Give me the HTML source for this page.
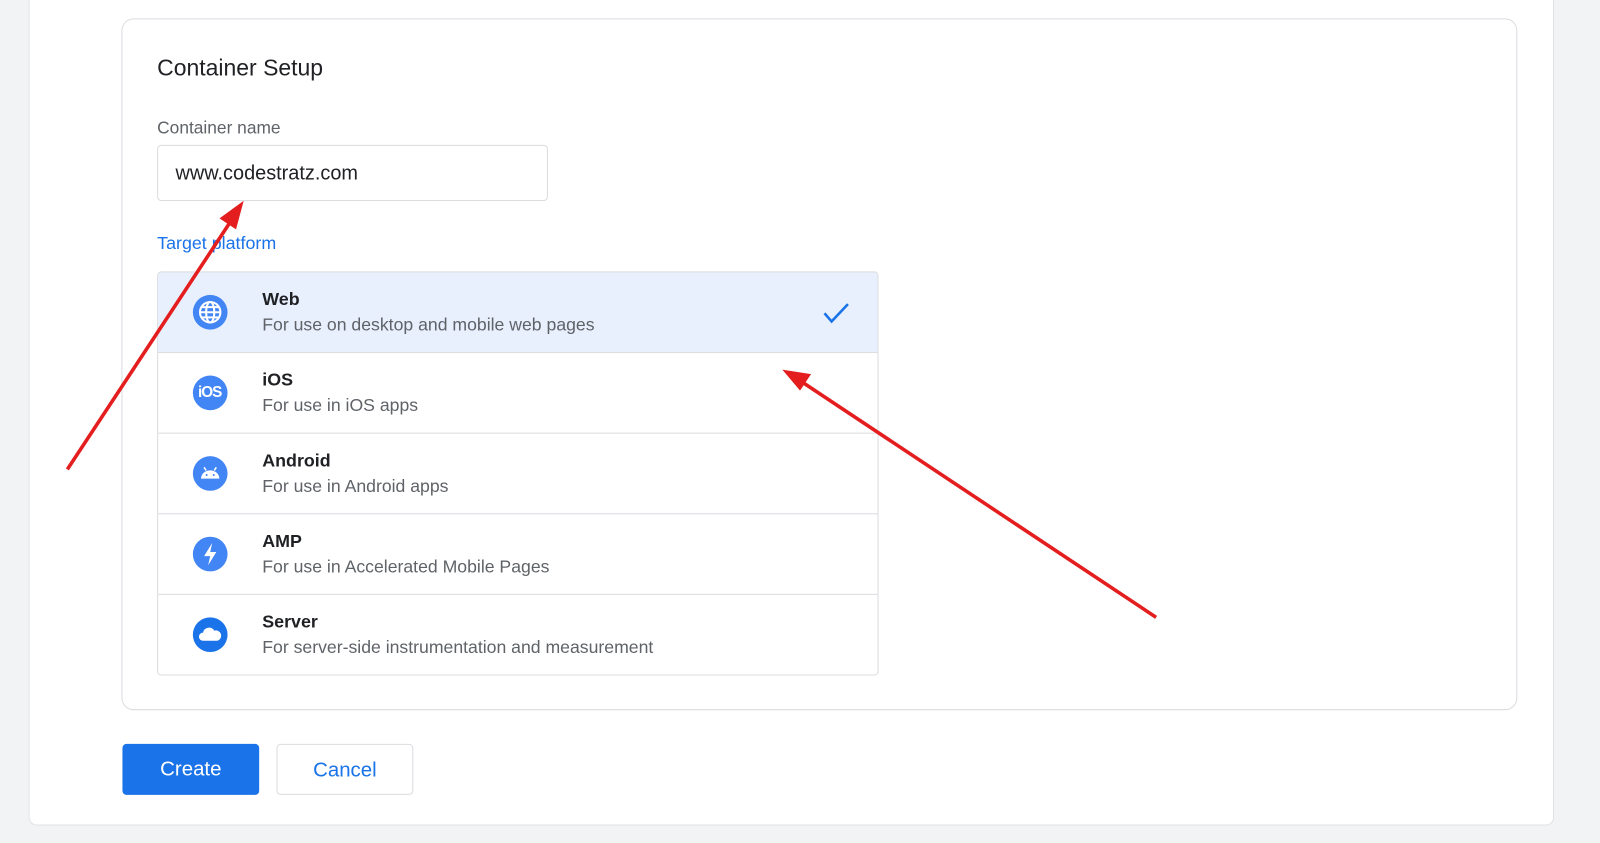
<!DOCTYPE html>
<html><head><style>
body{margin:0;width:1600px;height:826px;background:#f1f3f4;font-family:"Liberation Sans",Arial,sans-serif;position:relative;overflow:hidden}
#w{position:absolute;left:0;top:0;width:1568px;height:810px;transform:scale(1.0204);transform-origin:0 0}
.panel{position:absolute;left:28px;top:-10px;width:1493px;height:818px;background:#fff;border-left:1px solid #e0e2e5;border-right:1px solid #e0e2e5;border-bottom:1px solid #e0e2e5;border-radius:0 0 8px 8px}
.card{position:absolute;left:119px;top:18px;width:1366px;height:676px;border:1px solid #dadce0;border-radius:12px;background:#fff}
.t{position:absolute;color:#202124;white-space:nowrap}
.box{position:absolute;left:154px;top:266px;width:705px;height:394px;border:1px solid #dadce0;border-radius:4px;overflow:hidden}
.row{position:absolute;left:0;width:705px;height:78px;border-top:1px solid #dadce0}
.row .ic{position:absolute;left:34px;top:22px;width:34px;height:34px;border-radius:50%;background:#4285f4}
.row .n{position:absolute;left:102px;top:16px;font-size:17.5px;font-weight:bold;color:#202124}
.row .d{position:absolute;left:102px;top:41px;font-size:17.3px;color:#5f6368;white-space:nowrap}
.btn{position:absolute;top:729px;height:50px;border-radius:4px;font-size:20px;text-align:center;line-height:50px;box-sizing:border-box}
</style></head><body>
<div id="w">
<div class="panel"></div>
<div class="card"></div>
<div class="t" style="left:154px;top:54px;font-size:22.5px">Container Setup</div>
<div class="t" style="left:154px;top:116px;font-size:17px;color:#5f6368">Container name</div>
<div style="position:absolute;left:154px;top:142px;width:383px;height:55px;border:1px solid #dadce0;border-radius:4px;box-sizing:border-box"></div>
<div class="t" style="left:172px;top:159px;font-size:19.5px">www.codestratz.com</div>
<div class="t" style="left:154px;top:228px;font-size:17.5px;color:#1a73e8">Target platform</div>
<div class="box">
 <div class="row" style="top:-1px;background:#e8f0fe">
  <div class="ic"><svg width="34" height="34" viewBox="0 0 34 34" fill="none" stroke="#fff" stroke-width="2"><circle cx="17" cy="17" r="10"/><ellipse cx="17" cy="17" rx="4" ry="10"/><path d="M7 17h20M9 12h16M9 22h16"/></svg></div>
  <div class="n">Web</div><div class="d">For use on desktop and mobile web pages</div>
  <svg style="position:absolute;left:650px;top:28px" width="30" height="24" viewBox="0 0 30 24"><path d="M3 12l7 8L26 3" fill="none" stroke="#1a73e8" stroke-width="2.5"/></svg>
 </div>
 <div class="row" style="top:78px"><div class="ic"><span style="position:absolute;left:5px;top:8px;color:#fff;font-weight:bold;font-size:15px;letter-spacing:-1px">iOS</span></div><div class="n">iOS</div><div class="d">For use in iOS apps</div></div>
 <div class="row" style="top:157px"><div class="ic"><svg width="34" height="34" viewBox="0 0 34 34"><path d="M8 22a9 8 0 0 1 18 0z" fill="#fff"/><path d="M11 11l2 3M23 11l-2 3" stroke="#fff" stroke-width="1.5"/><circle cx="13.5" cy="18.5" r="1" fill="#4285f4"/><circle cx="20.5" cy="18.5" r="1" fill="#4285f4"/></svg></div><div class="n">Android</div><div class="d">For use in Android apps</div></div>
 <div class="row" style="top:236px"><div class="ic"><svg width="34" height="34" viewBox="0 0 34 34"><path d="M19 6l-8 13h6l-2 9 8-13h-6z" fill="#fff"/></svg></div><div class="n">AMP</div><div class="d">For use in Accelerated Mobile Pages</div></div>
 <div class="row" style="top:315px"><div class="ic" style="background:#1a73e8"><svg width="34" height="34" viewBox="0 0 34 34"><path d="M10 23a4 4 0 0 1 0-8 6 6 0 0 1 11-2 5 5 0 0 1 3 10z" fill="#fff"/></svg></div><div class="n">Server</div><div class="d">For server-side instrumentation and measurement</div></div>
</div>
<div class="btn" style="left:120px;width:134px;background:#1a73e8;color:#fff">Create</div>
<div class="btn" style="left:271px;width:134px;border:1px solid #dadce0;color:#1a73e8">Cancel</div>
<svg style="position:absolute;left:0;top:0" width="1600" height="826">
 <g stroke="#e41e1e" stroke-width="3.5" fill="#e41e1e">
  <line x1="66" y1="460" x2="228" y2="214"/>
  <polygon points="238,198 231,224 216,214" stroke-width="1"/>
  <line x1="1133" y1="605" x2="784" y2="373"/>
  <polygon points="768,363 794,367 784,382" stroke-width="1"/>
 </g>
</svg>
</div>
</body></html>
